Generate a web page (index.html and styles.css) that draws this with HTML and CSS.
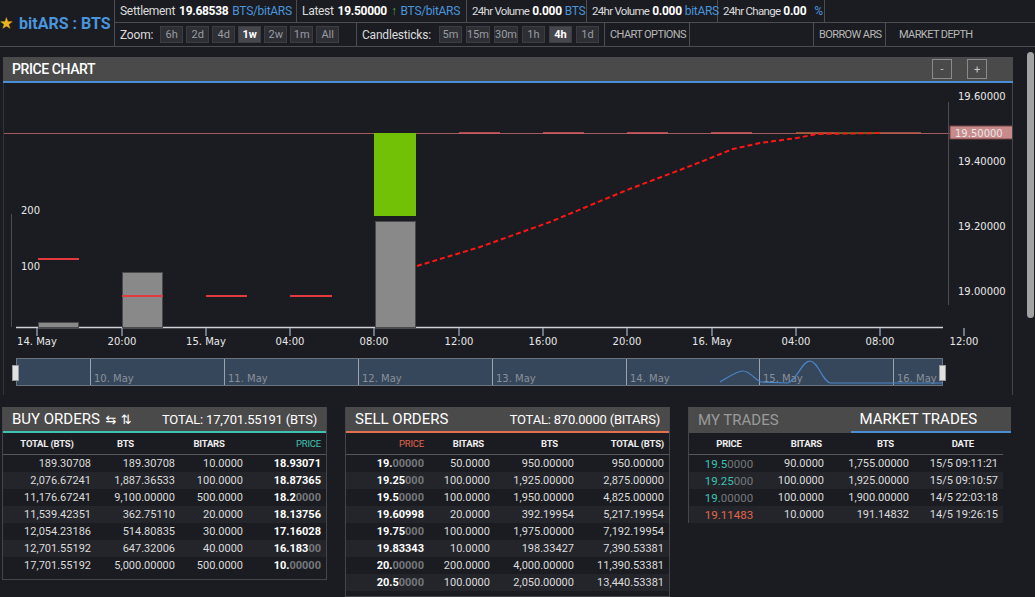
FILE: index.html
```html
<!DOCTYPE html>
<html>
<head>
  <title>bitARS : BTS</title>
  <meta name="viewport" content="width=device-width, initial-scale=1" />
  <link rel="stylesheet" href="styles.css">
</head>
<body>
  <header class="topbar">
    <div class="market"><span class="star">★</span>bitARS : BTS</div>
    <div class="bar-rows">
      <div class="stats">
        <div class="stat settle">Settlement <b>19.68538</b> <span class="unit">BTS/bitARS</span></div>
        <div class="stat latest">Latest <b>19.50000</b> <span class="up">↑</span> <span class="unit">BTS/bitARS</span></div>
        <div class="stat vol1"><span class="narrow">24hr Volume</span> <b>0.000</b> <span class="unit">BTS</span></div>
        <div class="stat vol2"><span class="narrow">24hr Volume</span> <b>0.000</b> <span class="unit">bitARS</span></div>
        <div class="stat change"><span class="narrow">24hr Change</span> <b>0.00</b> <span class="unit pct">%</span></div>
      </div>
      <div class="tools">
        <div class="tool zoom">
          <span class="tool-label">Zoom:</span>
          <span class="btn">6h</span><span class="btn">2d</span><span class="btn">4d</span>
          <span class="btn active">1w</span><span class="btn">2w</span><span class="btn">1m</span><span class="btn">All</span>
        </div>
        <div class="tool candles">
          <span class="tool-label">Candlesticks:</span>
          <span class="btn">5m</span><span class="btn">15m</span><span class="btn">30m</span>
          <span class="btn">1h</span><span class="btn active">4h</span><span class="btn">1d</span>
        </div>
        <div class="tool link options">CHART OPTIONS</div>
        <div class="tool spacer"></div>
        <div class="tool link borrow">BORROW ARS</div>
        <div class="tool link depth">MARKET DEPTH</div>
      </div>
    </div>
  </header>

  <section class="chart-panel">
    <div class="panel-head chart-head">
      <span class="chart-title">PRICE CHART</span>
      <div class="zoom-btns"><span class="sq">-</span><span class="sq">+</span></div>
    </div>
    <div class="chart-body">
      <svg width="1010" height="312" viewBox="3 83 1010 312">
        <!-- axes -->
        <line x1="3" y1="133.5" x2="1013" y2="133.5" stroke="#a35a5e" stroke-width="1"/>
        <line x1="11.5" y1="214" x2="11.5" y2="327" stroke="#4a4c52"/>
        <line x1="948.5" y1="102" x2="948.5" y2="305" stroke="#4a4c52"/>
        <line x1="16" y1="327.5" x2="943" y2="327.5" stroke="#d0d0d6" stroke-width="1.5"/>
        <g stroke="#8a96a8" stroke-width="1.5">
          <line x1="37" y1="328" x2="37" y2="336"/><line x1="122" y1="328" x2="122" y2="336"/>
          <line x1="206" y1="328" x2="206" y2="336"/><line x1="290" y1="328" x2="290" y2="336"/>
          <line x1="374" y1="328" x2="374" y2="336"/><line x1="459" y1="328" x2="459" y2="336"/>
          <line x1="543" y1="328" x2="543" y2="336"/><line x1="627" y1="328" x2="627" y2="336"/>
          <line x1="712" y1="328" x2="712" y2="336"/><line x1="796" y1="328" x2="796" y2="336"/>
          <line x1="880" y1="328" x2="880" y2="336"/><line x1="964" y1="328" x2="964" y2="336"/>
        </g>
        <g class="axis-text" text-anchor="middle">
          <text x="37" y="345">14. May</text><text x="122" y="345">20:00</text>
          <text x="206" y="345">15. May</text><text x="290" y="345">04:00</text>
          <text x="374" y="345">08:00</text><text x="459" y="345">12:00</text>
          <text x="543" y="345">16:00</text><text x="627" y="345">20:00</text>
          <text x="712" y="345">16. May</text><text x="796" y="345">04:00</text>
          <text x="880" y="345">08:00</text><text x="964" y="345">12:00</text>
        </g>
        <g class="axis-text">
          <text x="21" y="214">200</text><text x="21" y="270">100</text>
          <text x="958" y="100">19.60000</text><text x="958" y="165">19.40000</text>
          <text x="958" y="230">19.20000</text><text x="958" y="295">19.00000</text>
        </g>
        <rect x="950" y="126" width="63" height="13" fill="#c98a8c" stroke="#7a4446"/>
        <text class="axis-text" x="955" y="137" fill="#f6e6e6">19.50000</text>

        <!-- volume -->
        <g fill="#898989" stroke="#4a4a4e">
          <rect x="38.5" y="322.5" width="40" height="5"/>
          <rect x="122.5" y="272.5" width="40" height="55"/>
          <rect x="375.5" y="221.5" width="40" height="106"/>
        </g>

        <!-- candles -->
        <rect x="374" y="133" width="42" height="83" fill="#72c106"/>
        <g stroke="#e3393f" stroke-width="2">
          <line x1="38" y1="259" x2="79" y2="259"/>
          <line x1="122" y1="296" x2="163" y2="296"/>
          <line x1="206" y1="296" x2="247" y2="296"/>
          <line x1="290" y1="296" x2="332" y2="296"/>
        </g>
        <g stroke-width="2" opacity="0.8">
          <line x1="459" y1="133" x2="500" y2="133" stroke="#d05a60"/>
          <line x1="543" y1="133" x2="584" y2="133" stroke="#d05a60"/>
          <line x1="627" y1="133" x2="668" y2="133" stroke="#d05a60"/>
          <line x1="711" y1="133" x2="752" y2="133" stroke="#d05a60"/>
          <line x1="796" y1="133" x2="838" y2="133" stroke="#b0603a"/>
          <line x1="838" y1="133" x2="880" y2="133" stroke="#4f7a22"/>
          <line x1="880" y1="133" x2="921" y2="133" stroke="#b85a50"/>
        </g>

        <!-- moving average -->
        <polyline points="417,266 480,247 550,222 627,190 693,165 733,149 760,143 797,138 817,134 880,133"
                  fill="none" stroke="#ff1414" stroke-width="2" stroke-dasharray="5,3"/>

        <!-- navigator -->
        <rect x="16.5" y="358.5" width="926" height="27" fill="#37475b" stroke="#6b7381"/>
        <g stroke="#9aa3ae">
          <line x1="90.5" y1="359" x2="90.5" y2="385"/><line x1="224.5" y1="359" x2="224.5" y2="385"/>
          <line x1="358.5" y1="359" x2="358.5" y2="385"/><line x1="492.5" y1="359" x2="492.5" y2="385"/>
          <line x1="626.5" y1="359" x2="626.5" y2="385"/><line x1="759.5" y1="359" x2="759.5" y2="385"/>
          <line x1="893.5" y1="359" x2="893.5" y2="385"/>
        </g>
        <g class="nav-text">
          <text x="94" y="382">10. May</text><text x="228" y="382">11. May</text>
          <text x="362" y="382">12. May</text><text x="496" y="382">13. May</text>
          <text x="630" y="382">14. May</text><text x="763" y="382">15. May</text>
          <text x="897" y="382">16. May</text>
        </g>
        <path d="M720,382 C730,376 737,371 743,371 C750,371 755,380 761,382 L788,383 C797,380 802,361 810,361 C818,361 823,383 831,383 L943,383"
              fill="none" stroke="#4a86c8" stroke-width="1.2"/>
        <rect x="12.5" y="365.5" width="6" height="15" fill="#e0e0e0" stroke="#9a9a9a"/>
        <rect x="939.5" y="365.5" width="6" height="15" fill="#e0e0e0" stroke="#9a9a9a"/>
      </svg>
    </div>
  </section>

  <section class="orders">
    <div class="book buy">
      <div class="panel-head">
        <span class="book-title">BUY ORDERS <span class="arrows">⇆ ⇅</span></span>
        <span class="book-total">TOTAL: 17,701.55191 (BTS)</span>
      </div>
      <table class="grid">
        <colgroup><col class="w88"><col class="w84"><col class="w68"><col class="w83"></colgroup>
        <thead>
          <tr><th class="center">TOTAL (BTS)</th><th class="center pr15">BTS</th><th class="center">BITARS</th><th class="right bid">PRICE</th></tr>
        </thead>
        <tbody>
          <tr><td>189.30708</td><td>189.30708</td><td>10.0000</td><td class="price">18.93071</td></tr>
          <tr><td>2,076.67241</td><td>1,887.36533</td><td>100.0000</td><td class="price">18.87365</td></tr>
          <tr><td>11,176.67241</td><td>9,100.00000</td><td>500.0000</td><td class="price">18.2<i>0000</i></td></tr>
          <tr><td>11,539.42351</td><td>362.75110</td><td>20.0000</td><td class="price">18.13756</td></tr>
          <tr><td>12,054.23186</td><td>514.80835</td><td>30.0000</td><td class="price">17.16028</td></tr>
          <tr><td>12,701.55192</td><td>647.32006</td><td>40.0000</td><td class="price">16.183<i>00</i></td></tr>
          <tr><td>17,701.55192</td><td>5,000.00000</td><td>500.0000</td><td class="price">10.<i>00000</i></td></tr>
        </tbody>
      </table>
    </div>

    <div class="book sell">
      <div class="panel-head">
        <span class="book-title">SELL ORDERS</span>
        <span class="book-total">TOTAL: 870.0000 (BITARS)</span>
      </div>
      <table class="grid">
        <colgroup><col class="w78"><col class="w66"><col class="w84"><col class="w95"></colgroup>
        <thead>
          <tr><th class="right ask">PRICE</th><th class="right pr6">BITARS</th><th class="right pr16">BTS</th><th class="right">TOTAL (BTS)</th></tr>
        </thead>
        <tbody>
          <tr><td class="price">19.<i>00000</i></td><td>50.0000</td><td>950.00000</td><td>950.00000</td></tr>
          <tr><td class="price">19.25<i>000</i></td><td>100.0000</td><td>1,925.00000</td><td>2,875.00000</td></tr>
          <tr><td class="price">19.5<i>0000</i></td><td>100.0000</td><td>1,950.00000</td><td>4,825.00000</td></tr>
          <tr><td class="price">19.60998</td><td>20.0000</td><td>392.19954</td><td>5,217.19954</td></tr>
          <tr><td class="price">19.75<i>000</i></td><td>100.0000</td><td>1,975.00000</td><td>7,192.19954</td></tr>
          <tr><td class="price">19.83343</td><td>10.0000</td><td>198.33427</td><td>7,390.53381</td></tr>
          <tr><td class="price">20.<i>00000</i></td><td>200.0000</td><td>4,000.00000</td><td>11,390.53381</td></tr>
          <tr><td class="price">20.5<i>0000</i></td><td>100.0000</td><td>2,050.00000</td><td>13,440.53381</td></tr>
        </tbody>
      </table>
    </div>

    <div class="book trades">
      <div class="panel-head tabs">
        <span class="tab">MY TRADES</span>
        <span class="tab active">MARKET TRADES</span>
      </div>
      <table class="grid">
        <colgroup><col class="w80"><col class="w55"><col class="w85"><col class="w94"></colgroup>
        <thead>
          <tr><th class="center">PRICE</th><th class="right pr2">BITARS</th><th class="right pr15">BTS</th><th class="right pr29">DATE</th></tr>
        </thead>
        <tbody>
          <tr><td class="center buy-price">19.5<i>0000</i></td><td>90.0000</td><td>1,755.00000</td><td>15/5 09:11:21</td></tr>
          <tr><td class="center buy-price">19.25<i>000</i></td><td>100.0000</td><td>1,925.00000</td><td>15/5 09:10:57</td></tr>
          <tr><td class="center buy-price">19.<i>00000</i></td><td>100.0000</td><td>1,900.00000</td><td>14/5 22:03:18</td></tr>
          <tr><td class="center sell-price">19.11483</td><td>10.0000</td><td>191.14832</td><td>14/5 19:26:15</td></tr>
        </tbody>
      </table>
    </div>
  </section>

  <div class="scrollbar"></div>
</body>
</html>
```

FILE: styles.css
```css
body {
  margin: 0;
  background: #1b1c21;
  color: #dcdcdc;
  font-family: Roboto, "Liberation Sans", sans-serif;
  font-size: 12px;
  overflow: hidden;
}

/* top bar */

.topbar {
  display: flex;
  height: 47px;
  border-bottom: 1px solid #4b4d53;
  box-sizing: border-box;
}

.market {
  width: 115px;
  flex-shrink: 0;
  border-right: 1px solid #4b4d53;
  display: flex;
  align-items: center;
  color: #4a95dd;
  font-weight: 700;
  font-size: 16px;
  box-sizing: border-box;
}

.star {
  color: #e9b51f;
  font-size: 14px;
  margin-right: 6px;
}

.bar-rows {
  flex: 1;
  display: flex;
  flex-direction: column;
}

.stats {
  display: flex;
  height: 23px;
  border-bottom: 1px solid #4b4d53;
  box-sizing: border-box;
}

.stat {
  flex-shrink: 0;
  border-right: 1px solid #4b4d53;
  padding: 0 5px;
  display: flex;
  align-items: center;
  gap: 4px;
  white-space: nowrap;
  letter-spacing: -0.3px;
  box-sizing: border-box;
}

.stat b {
  color: #fff;
  font-size: 12px;
}

.vol1, .vol2, .change {
  gap: 3px;
}

.narrow {
  font-size: 11.5px;
  letter-spacing: -0.7px;
}

.settle { width: 182px; }
.latest { width: 170px; }
.vol1 { width: 120px; }
.vol2 { width: 131px; }
.change { width: 107px; }

.unit {
  color: #4a95dd;
}

.pct {
  margin-left: 5px;
}

.up {
  color: #4caf50;
}

.tools {
  display: flex;
  flex: 1;
}

.tool {
  flex-shrink: 0;
  border-right: 1px solid #4b4d53;
  display: flex;
  align-items: center;
  padding: 0 5px;
  gap: 3px;
  box-sizing: border-box;
  white-space: nowrap;
}

.tool:last-child {
  border-right: none;
}

.tool-label {
  margin-right: 4px;
  letter-spacing: -0.2px;
}

.zoom { width: 242px; }
.candles { width: 248px; gap: 4px; }
.options { width: 85px; }
.spacer { width: 124px; }
.borrow { width: 72px; }
.depth { width: 149px; padding-left: 13px; }

.link {
  color: #b8b8b8;
  font-size: 11px;
  letter-spacing: -0.6px;
}

.btn {
  background: #2d2f35;
  border: 1px solid #3b3d43;
  color: #9a9ca2;
  height: 17px;
  min-width: 23px;
  padding: 0 2px;
  display: flex;
  align-items: center;
  justify-content: center;
  font-size: 11px;
  box-sizing: border-box;
}

.btn.active {
  background: #45474d;
  color: #fff;
  font-weight: 700;
}

/* price chart */

.chart-panel {
  width: 1010px;
  margin: 10px 0 0 3px;
}

.panel-head {
  background: #4a4a4a;
  height: 26px;
  display: flex;
  align-items: center;
  justify-content: space-between;
  padding: 0 9px;
  box-sizing: border-box;
  color: #fff;
}

.chart-head {
  border-bottom: 2px solid #4a8fd6;
  padding-right: 26px;
}

.chart-title {
  font-size: 14px;
  font-weight: 500;
  letter-spacing: -0.4px;
}

.zoom-btns {
  display: flex;
  gap: 15px;
}

.sq {
  width: 20px;
  height: 20px;
  border: 1px solid #8a8a8a;
  box-sizing: border-box;
  display: flex;
  align-items: center;
  justify-content: center;
  color: #ccc;
  font-size: 11px;
}

.chart-body {
  height: 312px;
  border-left: 1px solid #34353a;
  border-right: 1px solid #44454a;
  box-sizing: border-box;
  overflow: hidden;
}

.chart-body svg {
  display: block;
  margin-left: -1px;
}

.axis-text {
  font-family: "DejaVu Sans", sans-serif;
  font-size: 10px;
  fill: #e8e8e8;
}

.nav-text {
  font-family: "DejaVu Sans", sans-serif;
  font-size: 10px;
  fill: #8a9099;
}

/* order books */

.orders {
  display: flex;
  align-items: flex-start;
  gap: 18px;
  margin: 12px 0 0 2px;
}

.book {
  width: 325px;
  border: 1px solid #45464b;
  border-top: none;
  padding-bottom: 5px;
  box-sizing: border-box;
}

.buy .panel-head {
  border-bottom: 2px solid #3fc2b1;
}

.sell .panel-head {
  border-bottom: 2px solid #e2704f;
}

.book-title {
  font-size: 15px;
}

.arrows {
  font-family: "DejaVu Sans", sans-serif;
  font-size: 13px;
  margin-left: 2px;
}

.book-total {
  font-size: 13px;
  letter-spacing: -0.2px;
}

.grid {
  width: 100%;
  table-layout: fixed;
  border-collapse: collapse;
}

.grid th {
  height: 21px;
  font-size: 9.5px;
  font-weight: 700;
  color: #eee;
  letter-spacing: -0.2px;
  border-bottom: 1px solid #55575c;
  padding: 0;
}

.grid td {
  height: 17px;
  padding: 0;
  text-align: right;
  font-size: 11px;
  color: #dcdcdc;
  white-space: nowrap;
}

.grid tbody tr:nth-child(even) {
  background: #24252b;
}

.grid th:last-child,
.grid td:last-child {
  padding-right: 5px;
}

.grid .center { text-align: center; }
.grid .right { text-align: right; }
.grid th.pr2 { padding-right: 2px; }
.grid th.pr6 { padding-right: 6px; }
.grid th.pr15 { padding-right: 15px; }
.grid th.pr16 { padding-right: 16px; }
.grid th.pr29 { padding-right: 29px; }

.w55 { width: 55px; }
.w66 { width: 66px; }
.w68 { width: 68px; }
.w78 { width: 78px; }
.w80 { width: 80px; }
.w83 { width: 83px; }
.w84 { width: 84px; }
.w85 { width: 85px; }
.w88 { width: 88px; }
.w94 { width: 94px; }
.w95 { width: 95px; }

.grid th.bid { color: #3fc2b1; font-weight: 400; }
.grid th.ask { color: #e2664c; font-weight: 400; }

.price {
  font-weight: 700;
}

.grid td.price {
  color: #fff;
}

.grid td i {
  font-style: normal;
  color: #76787d;
}

.grid td.buy-price {
  color: #3fc2b1;
  font-size: 11.5px;
}

.grid td.sell-price {
  color: #e2664c;
  font-size: 11.5px;
}

.trades {
  width: 323px;
  border: none;
  border-left: 1px solid #45464b;
  padding-bottom: 0;
}

.trades .grid {
  width: 314px;
}

.tabs {
  padding: 0;
  justify-content: flex-start;
}

.tab {
  height: 100%;
  display: flex;
  align-items: center;
  font-size: 15px;
  color: #9a9a9a;
  width: 162px;
  padding-left: 9px;
  box-sizing: border-box;
}

.tab.active {
  color: #fff;
  width: 161px;
  border-bottom: 2px solid #4a8fd6;
}

/* page scrollbar */

.scrollbar {
  position: fixed;
  top: 52px;
  right: 1px;
  width: 7px;
  height: 266px;
  background: #a3a3a3;
  border-radius: 4px;
}
```
